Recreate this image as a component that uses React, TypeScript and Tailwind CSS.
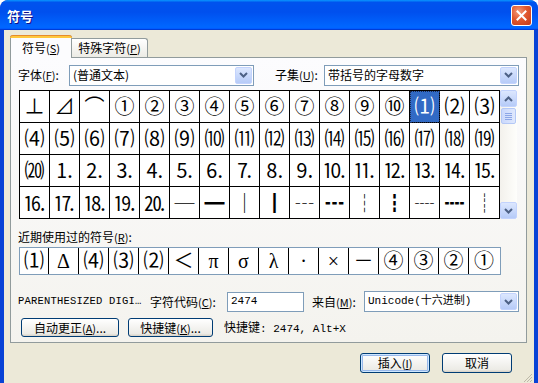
import React from "react";

const GRID = [
  ["⊥", "⊿", "⌒", "①", "②", "③", "④", "⑤", "⑥", "⑦", "⑧", "⑨", "⑩", "⑴", "⑵", "⑶"],
  ["⑷", "⑸", "⑹", "⑺", "⑻", "⑼", "⑽", "⑾", "⑿", "⒀", "⒁", "⒂", "⒃", "⒄", "⒅", "⒆"],
  ["⒇", "⒈", "⒉", "⒊", "⒋", "⒌", "⒍", "⒎", "⒏", "⒐", "⒑", "⒒", "⒓", "⒔", "⒕", "⒖"],
  ["⒗", "⒘", "⒙", "⒚", "⒛", "─", "━", "│", "┃", "┄", "┅", "┆", "┇", "┈", "┉", "┊"],
];

const RECENT = ["⑴", "Δ", "⑷", "⑶", "⑵", "＜", "π", "σ", "λ", "·", "×", "－", "④", "③", "②", "①"];

export default function App() {
  return (
    <div className="w-[538px] h-[383px] flex flex-col bg-[#0842d6] rounded-t-[8px] font-['Noto_Sans_CJK_SC',sans-serif] text-[12px] text-black overflow-hidden select-none">
      {/* Title bar */}
      <div className="h-[30px] shrink-0 flex items-center justify-between pl-[7px] pr-[6px] rounded-t-[8px] bg-[linear-gradient(180deg,#0997ff,#0053ee_8%,#0050ee_40%,#0066ff_88%,#0066ff_93%,#005bff_95%,#003dd7_96%,#003dd7)]">
        <span className="text-white font-bold text-[13px] leading-none [text-shadow:1px_1px_#0f1089]">符号</span>
        <div className="w-[21px] h-[21px] rounded-[3px] border border-white flex items-center justify-center bg-[radial-gradient(circle_at_35%_30%,#f39b7c,#e1582e_45%,#c4391a)]">
          <svg width="11" height="11" viewBox="0 0 11 11">
            <path d="M1.5 1.5 L9.5 9.5 M9.5 1.5 L1.5 9.5" stroke="white" strokeWidth="2" strokeLinecap="square" />
          </svg>
        </div>
      </div>

      {/* Body */}
      <div className="flex-1 mx-[4px] mb-[4px] bg-[#ece9d8] flex flex-col pl-[6px] pr-[7px] pt-[5px]">
        {/* Tabs */}
        <div className="h-[22px] flex items-end relative z-10">
          <div className="h-[23px] w-[62px] -mb-[1px] bg-[#fcfcfe] border-x border-[#919b9c] rounded-t-[3px] flex flex-col">
            <div className="h-[3px] bg-[#ffc83c] border-t border-[#e68b2c] rounded-t-[3px] -mx-[1px]" />
            <div className="flex-1 flex items-center justify-center">
              符号<Key k="S" />
            </div>
          </div>
          <div className="h-[19px] w-[76px] bg-[linear-gradient(180deg,#ffffff,#ecebe5)] border-t border-r border-[#919b9c] rounded-tr-[3px] flex items-center justify-center">
            特殊字符<Key k="P" />
          </div>
        </div>

        {/* Panel */}
        <div className="h-[286px] border border-[#919b9c] bg-[linear-gradient(180deg,#fcfcfe,#f4f3ee)] pl-[7px] pr-[7px] pt-[7px] flex flex-col">
          {/* Font row */}
          <div className="flex items-center h-[20px]">
            <span className="w-[51px]">字体<Key k="F" />:</span>
            <Combo width="w-[185px]" text="(普通文本)" />
            <span className="w-[49px] ml-[21px]">子集<Key k="U" />:</span>
            <Combo width="w-[195px]" text="带括号的字母数字" />
          </div>

          {/* Symbol grid */}
          <div className="flex mt-[5px] ml-[1px]">
            <div className="border-l border-t border-black flex flex-col bg-white font-['Liberation_Serif','Noto_Sans_CJK_SC',serif] text-[20px] leading-none">
              {GRID.map((row, r) => (
                <div key={r} className={`flex ${r === 3 ? "font-['Noto_Sans_CJK_SC',sans-serif]" : ""}`}>
                  {row.map((c, i) => {
                    const sel = r === 0 && i === 13;
                    return (
                      <div
                        key={i}
                        className={`w-[30px] h-[32px] border-r border-b border-black flex items-center justify-center ${
                          sel ? "bg-[#316ac5] text-white outline-1 outline-dotted outline-[#1a2a50] -outline-offset-1" : ""
                        }`}
                      >
                        {c}
                      </div>
                    );
                  })}
                </div>
              ))}
            </div>
            <div className="w-[17px] flex flex-col bg-[linear-gradient(90deg,#f3f1ec,#fefefb)]">
              <ScrollBtn dir="up" />
              <div className="h-[1px]" />
              <div className="h-[16px] mx-[1px] rounded-[2px] border border-[#b4c8f6] bg-[linear-gradient(90deg,#cad8fc,#dfe8fd)] flex flex-col items-center justify-center gap-[1px]">
                {[0, 1, 2, 3].map((i) => (
                  <div key={i} className="w-[7px] h-[1px] bg-[#8ca6e6]" />
                ))}
              </div>
              <div className="flex-1" />
              <ScrollBtn dir="down" />
            </div>
          </div>

          {/* Recent */}
          <div className="mt-[11px] leading-[14px]">近期使用过的符号<Key k="R" />:</div>
          <div className="mt-[3px] ml-[1px] w-[482px] h-[28px] border border-[#7f9db9] bg-white flex font-['Liberation_Serif','Noto_Sans_CJK_SC',serif] text-[20px] leading-none">
            {RECENT.map((c, i) => (
              <div
                key={i}
                className={`${i === 0 ? "w-[29px]" : "w-[30px]"} h-full flex items-center justify-center ${
                  i < RECENT.length - 1 ? "border-r border-black" : ""
                }`}
              >
                {c}
              </div>
            ))}
          </div>

          {/* Code row */}
          <div className="flex items-center h-[21px] mt-[16px]">
            <span className="w-[132px] font-['Liberation_Mono',monospace] text-[10.5px] tracking-[0.2px] whitespace-nowrap overflow-hidden">
              PARENTHESIZED DIGI…
            </span>
            <span className="w-[77px]">字符代码<Key k="C" />:</span>
            <div className="w-[77px] h-[20px] border border-[#7f9db9] bg-white flex items-center px-[3px] font-['Liberation_Mono',monospace] text-[11px]">
              2474
            </div>
            <span className="w-[52px] ml-[8px]">来自<Key k="M" />:</span>
            <Combo width="w-[155px]" text="Unicode(十六进制)" mono />
          </div>

          {/* Buttons row */}
          <div className="flex items-center mt-[6px] ml-[3px]">
            <XpButton className="w-[98px] h-[19px]">
              自动更正<Key k="A" />...
            </XpButton>
            <XpButton className="w-[85px] h-[19px] ml-[9px]">
              快捷键<Key k="K" />...
            </XpButton>
            <span className="ml-[11px]">
              快捷键<span className="font-['Liberation_Mono',monospace] text-[11px]">: 2474, Alt+X</span>
            </span>
          </div>
        </div>

        {/* Dialog buttons */}
        <div className="flex justify-end gap-[12px] mt-[10px] pr-[15px]">
          <XpButton className="w-[70px] h-[20px]" isDefault>
            插入<Key k="I" />
          </XpButton>
          <XpButton className="w-[70px] h-[20px]">取消</XpButton>
        </div>
        <div className="flex-1 flex justify-end items-end">
          <svg width="10" height="10" viewBox="0 0 10 10" className="-mr-[6px] mb-[1px]">
            <path d="M9 1 L1 9 M9 4 L4 9 M9 7 L7 9" stroke="#bdb9a8" strokeWidth="1" />
          </svg>
        </div>
      </div>
    </div>
  );
}

function Key({ k }: { k: string }) {
  return (
    <span className="text-[11px]">
      (<span className="underline">{k}</span>)
    </span>
  );
}

function Chevron({ dir }: { dir: "up" | "down" }) {
  return (
    <svg width="9" height="6" viewBox="0 0 9 6">
      <path
        d={dir === "down" ? "M1 1 L4.5 4.5 L8 1" : "M1 5 L4.5 1.5 L8 5"}
        stroke="#4d6185"
        strokeWidth="2"
        fill="none"
      />
    </svg>
  );
}

function Combo({ width, text, mono }: { width: string; text: string; mono?: boolean }) {
  return (
    <div className={`${width} h-[21px] border border-[#7f9db9] bg-white flex items-center`}>
      <span
        className={`flex-1 pl-[3px] whitespace-nowrap ${
          mono ? "font-['Liberation_Mono','Noto_Sans_CJK_SC',monospace] text-[11px]" : ""
        }`}
      >
        {text}
      </span>
      <div className="w-[17px] h-[17px] mr-[1px] rounded-[2px] border border-[#c3d3fd] bg-[linear-gradient(180deg,#dce7fe,#b6cbf8)] flex items-center justify-center">
        <Chevron dir="down" />
      </div>
    </div>
  );
}

function ScrollBtn({ dir }: { dir: "up" | "down" }) {
  return (
    <div className="w-[17px] h-[17px] rounded-[2px] border border-[#c3d3fd] bg-[linear-gradient(180deg,#dce7fe,#b6cbf8)] flex items-center justify-center">
      <Chevron dir={dir} />
    </div>
  );
}

function XpButton({
  children,
  className,
  isDefault,
}: {
  children: React.ReactNode;
  className: string;
  isDefault?: boolean;
}) {
  return (
    <div
      className={`${className} border border-[#003c74] rounded-[3px] bg-[linear-gradient(180deg,#ffffff,#ecebe6_86%,#d6d0c5)] flex items-center justify-center whitespace-nowrap ${
        isDefault ? "shadow-[inset_0_0_0_1px_#cee7ff,inset_0_0_0_2px_#98b8ea]" : ""
      }`}
    >
      {children}
    </div>
  );
}
